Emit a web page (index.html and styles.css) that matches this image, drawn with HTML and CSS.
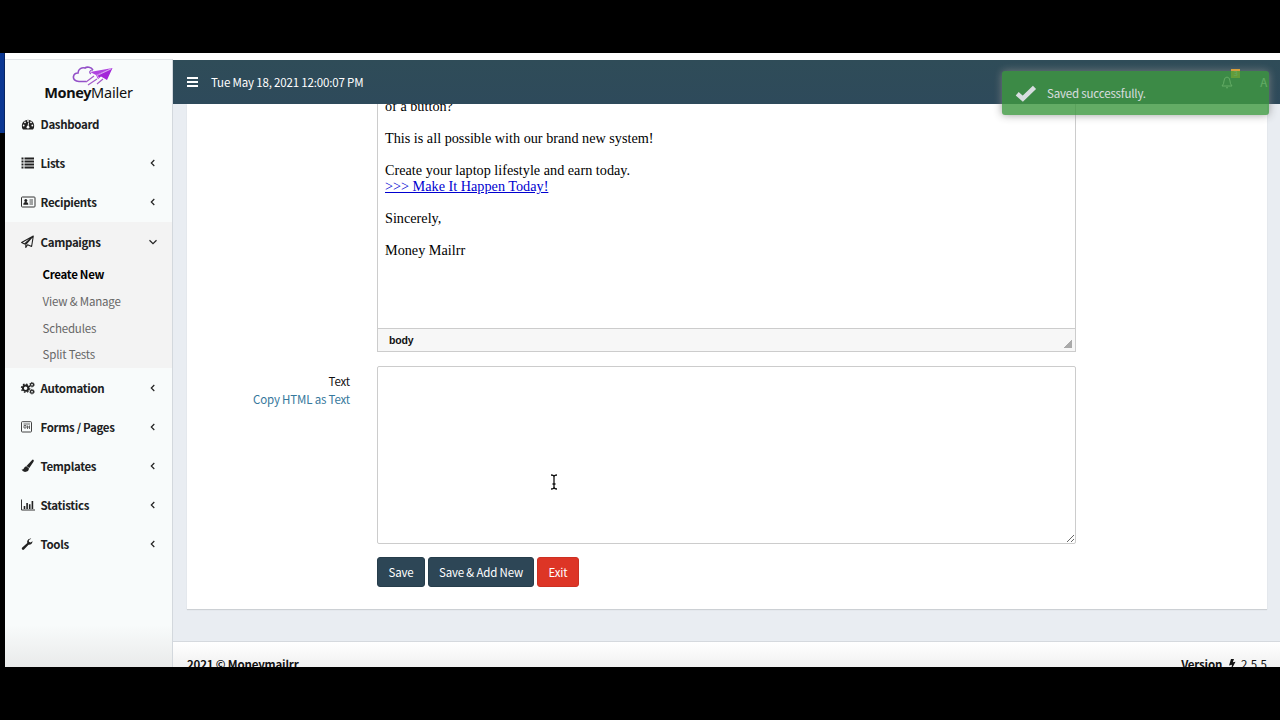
FILE: index.html
```html
<!DOCTYPE html>
<html lang="en">
<head>
<meta charset="utf-8">
<title>MoneyMailer - Campaigns</title>
<link rel="stylesheet" href="styles.css">
</head>
<body>
<div class="screen">
  <div class="desktop-edge"></div>
  <div class="app">
    <aside class="sidebar">
      <div class="logo">
        <svg class="logo-mark" width="42" height="21" viewBox="0 0 42 21" fill="none">
          <path d="M14 15.500H7C3 15.500 1 13 1.500 10.500C2 8 4 7 6 7C6 3 10 1 13 2C15 .500 19 1 21 4" stroke="#9350c8" stroke-width="1.600"/>
          <path d="M21 4C17 4 17 7 19 8" stroke="#9350c8" stroke-width="1.200"/>
          <path d="M40.500 2L18 6L24 9Z" fill="#b043e0"/>
          <path d="M40.500 2L24 9L26 13L29 10.500L35 14Z" fill="#a325d8"/>
          <path d="M39 3L25 9.500L27 12" stroke="#f2dcfa" stroke-width=".7"/>
          <path d="M22 10L14 16M25 13L16 19M31 13L25 18" stroke="#a35ac8" stroke-width="1.200"/>
        </svg>
        <div class="logo-text"><b>Money</b>Mailer</div>
      </div>
      <nav class="menu">
        <a class="item"><svg class="ico" viewBox="0 0 14 14"><path d="M2 12.500A6.200 6.200 0 1 1 12 12.500Z" fill="#222"/><g fill="#fff"><circle cx="2.700" cy="8.500" r=".9"/><circle cx="4" cy="5.300" r=".9"/><circle cx="7" cy="4" r=".9"/><circle cx="10" cy="5.300" r=".9"/><circle cx="11.300" cy="8.500" r=".9"/></g><path d="M7.600 5.500L7 10" stroke="#fff" stroke-width=".9"/><circle cx="7" cy="10.200" r="1.400" fill="#fff"/></svg><span>Dashboard</span></a>
        <a class="item"><svg class="ico" viewBox="0 0 14 14"><path d="M.5 2.500H2.500M.5 5.500H2.500M.5 8.500H2.500M.5 11.500H2.500M3.500 2.500H13M3.500 5.500H13M3.500 8.500H13M3.500 11.500H13" stroke="#222" stroke-width="1.900"/></svg><span>Lists</span><svg class="chev" viewBox="0 0 8 8"><path d="M5.300 1L2.300 4L5.300 7"/></svg></a>
        <a class="item"><svg class="ico" viewBox="0 0 14 14"><rect x=".5" y="2" width="13.500" height="10" rx=".8" fill="none" stroke="#333"/><circle cx="4.800" cy="5.500" r="1.500" fill="#222"/><path d="M2.300 9.800Q2.300 7 4.800 7T7.300 9.800Z" fill="#222"/><path d="M8.500 5H12M8.500 7H12M8.500 9H12" stroke="#333" stroke-width=".9"/></svg><span>Recipients</span><svg class="chev" viewBox="0 0 8 8"><path d="M5.300 1L2.300 4L5.300 7"/></svg></a>
        <div class="group">
          <a class="item"><svg class="ico" viewBox="0 0 14 14"><path d="M12.300 1L.6 7.500L3.600 9L12.300 1L10.600 11.500L6.600 9.700L4.800 12.500V9.500L12.300 1" fill="none" stroke="#222" stroke-width="1.100" stroke-linejoin="round"/></svg><span>Campaigns</span><svg class="chev" viewBox="0 0 8 8"><path d="M.5 2.300L4 5.700L7.500 2.300"/></svg></a>
          <a class="sub active">Create New</a>
          <a class="sub">View &amp; Manage</a>
          <a class="sub">Schedules</a>
          <a class="sub">Split Tests</a>
        </div>
        <a class="item"><svg class="ico" viewBox="0 0 14 14"><g fill="none" stroke="#222"><circle cx="4.600" cy="7.200" r="2.700" stroke-width="1.900"/><circle cx="4.600" cy="7.200" r="4.100" stroke-width="1.400" stroke-dasharray="1.600 1.620"/><circle cx="11" cy="3.700" r="1.500" stroke-width="1.300"/><circle cx="11" cy="10.700" r="1.500" stroke-width="1.300"/><circle cx="11" cy="3.700" r="2.300" stroke-width=".8" stroke-dasharray="1 .8"/><circle cx="11" cy="10.700" r="2.300" stroke-width=".8" stroke-dasharray="1 .8"/></g></svg><span>Automation</span><svg class="chev" viewBox="0 0 8 8"><path d="M5.300 1L2.300 4L5.300 7"/></svg></a>
        <a class="item"><svg class="ico" viewBox="0 0 14 14"><rect x=".5" y="1.700" width="10" height="10.300" rx=".8" fill="none" stroke="#444"/><path d="M2.500 4H9M3 5.500H5V8H3ZM6.500 5.500V9M8.500 5.500V9M6.500 7H8.500" fill="none" stroke="#555" stroke-width=".9"/></svg><span>Forms / Pages</span><svg class="chev" viewBox="0 0 8 8"><path d="M5.300 1L2.300 4L5.300 7"/></svg></a>
        <a class="item"><svg class="ico" viewBox="0 0 14 14"><path d="M12.300.7Q13.300 1.300 12.500 2.800L8.300 9L5.500 6.900L10.900 1.200Q11.600.4 12.300.7ZM5.200 7.200L7.900 9.300Q8 12.800 4 12.900Q1.500 12.900.5 10.200Q2 11 2.800 9.500Q3.500 7.500 5.200 7.200Z" fill="#222"/></svg><span>Templates</span><svg class="chev" viewBox="0 0 8 8"><path d="M5.300 1L2.300 4L5.300 7"/></svg></a>
        <a class="item"><svg class="ico" viewBox="0 0 14 14"><path d="M.5 1.500V12H14" fill="none" stroke="#333"/><path d="M3.500 8V11M6.100 5V11M8.700 6.300V11M11.400 3V11" stroke="#222" stroke-width="1.600"/></svg><span>Statistics</span><svg class="chev" viewBox="0 0 8 8"><path d="M5.300 1L2.300 4L5.300 7"/></svg></a>
        <a class="item"><svg class="ico" viewBox="0 0 14 14"><path d="M9.900 1.500Q7 1.300 6.200 4Q6 5 6.300 6L1 10.800Q.4 11.800 1.200 12.500T3 12.600L7.500 7.700Q10.800 8 11.700 4.200L9.400 5.500L7.900 4.700V3L10.200 1.700Z" fill="#222"/></svg><span>Tools</span><svg class="chev" viewBox="0 0 8 8"><path d="M5.300 1L2.300 4L5.300 7"/></svg></a>
      </nav>
    </aside>
    <div class="main">
      <header class="topbar">
        <svg width="11" height="10" viewBox="0 0 11 10"><path d="M0 1H11M0 5H11M0 9H11" stroke="#fff" stroke-width="1.900"/></svg>
        <span class="date">Tue May 18, 2021 12:00:07 PM</span>
        <div class="bell"><svg width="12" height="13" viewBox="0 0 12 13" fill="none" stroke="#fff"><path d="M6 1Q9 1.500 9 5Q9 8 11 10H1Q3 8 3 5Q3 1.500 6 1ZM5 11.500Q6 12.500 7 11.500"/></svg><i class="badge">3</i></div>
        <span class="user">A</span>
      </header>
      <section class="content">
        <div class="card">
          <div class="row">
            <div class="label"></div>
            <div class="editor">
              <div class="doc">
                <p>of a button?</p>
                <p>This is all possible with our brand new system!</p>
                <p>Create your laptop lifestyle and earn today.<br><a class="doclink">&gt;&gt;&gt; Make It Happen Today!</a></p>
                <p>Sincerely,</p>
                <p>Money Mailrr</p>
              </div>
              <div class="path"><b>body</b><i class="grip"></i></div>
            </div>
          </div>
          <div class="row">
            <div class="label">Text<br><a class="copy">Copy HTML as Text</a></div>
            <div class="textarea"><svg width="9" height="9" viewBox="0 0 9 9"><path d="M1 8L8 1M5 8L8 5" stroke="#555" stroke-width=".9"/></svg></div>
          </div>
          <div class="buttons"><a class="btn w1">Save</a><a class="btn w2">Save &amp; Add New</a><a class="btn exit">Exit</a></div>
        </div>
      </section>
      <footer class="footer"><b>2021 © Moneymailrr</b><span><b>Version</b> <svg width="8" height="12" viewBox="0 0 8 12"><path d="M3 0H6L4.800 3.300L7.500 2.700L3 11.500L4 5.700L1 6.500Z" fill="#111"/></svg> <span class="num">2.5.5</span></span></footer>
    </div>
  </div>
  <div class="toast"><svg width="22" height="17" viewBox="0 0 22 17"><path d="M2.200 8.800L7.800 13.600L19.500 2.300" fill="none" stroke="#fff" stroke-width="4.500"/></svg><span>Saved successfully.</span></div>
  <svg class="cursor" width="8" height="16" viewBox="0 0 8 16"><path d="M1 1Q4 1 4 3Q4 1 7 1M4 3V13M1 15Q4 15 4 13Q4 15 7 15M2.500 10H5.500" fill="none" stroke="#111" stroke-width="1.300"/></svg>
</div>
</body>
</html>
```
FILE: styles.css
```css
* { box-sizing: border-box; }
body { margin: 0; background: #000; font: 11.500px/18px "Noto Sans CJK SC", "Noto Sans", sans-serif; letter-spacing: -.17px; color: #111; }
b { letter-spacing: -.18px; }
.screen { position: relative; width: 1280px; height: 720px; padding: 53px 0; overflow: hidden; display: flex; }
.desktop-edge { width: 5px; height: 80px; background: linear-gradient(90deg, #0b3792 70%, #071c48); flex: none; }
.app { flex: 1; height: 614px; display: flex; padding-top: 7px; background: #fff; overflow: hidden; }
.sidebar { width: 168px; height: 608px; flex: none; border-top: 1px solid #e2e5e8; margin-top: -1px; border-right: 1px solid #d3d8dd; background: linear-gradient(#f8fbfb 0, #f8fbfb 565px, #e9eaea 608px); }
.logo { height: 44.500px; padding-top: 6px; display: flex; flex-direction: column; align-items: center; }
.logo-mark { flex: none; margin-left: 8px; }
.logo-text { font: 14.500px/18px "Noto Sans", sans-serif; letter-spacing: -.2px; margin-top: -4px; white-space: nowrap; color: #111; }
.logo-text b { font-weight: 700; letter-spacing: -.4px; }
.menu { font-weight: 700; letter-spacing: -.32px; }
.item { height: 39.200px; display: flex; align-items: center; padding: 0 15px 0 15.500px; color: #202122; }
.ico { width: 14px; height: 14px; margin-right: 6px; flex: none; overflow: visible; }
.chev { width: 8px; height: 8px; margin-left: auto; fill: none; stroke: #222; stroke-width: 1.200; }
.group { background: #f3f3f3; }
.sub { display: block; height: 26.700px; line-height: 27px; padding-left: 37.500px; font-weight: 400; color: #666; letter-spacing: -.17px; }
.sub.active { font-weight: 700; color: #000; letter-spacing: -.3px; }
.main { flex: 1; display: flex; flex-direction: column; min-width: 0; }
.topbar { height: 44px; flex: none; background: linear-gradient(#2f4c58, #2e4a5b); color: #fff; display: flex; align-items: center; padding: 0 13px 0 14px; }
.date { margin-left: 13px; }
.bell { margin-left: auto; position: relative; display: flex; }
.badge { position: absolute; left: 10px; top: -7px; width: 9px; height: 9px; background: #ffab1c; font: 7px/9px "Noto Sans", sans-serif; letter-spacing: 0; text-align: center; color: #fff; }
.user { margin-left: 27px; }
.content { height: 537px; flex: none; background: #e9edf2; padding: 0 13px 0 14px; }
.card { height: 505px; background: #fff; box-shadow: 0 1px 1px rgba(0,0,0,.12); padding-right: 191px; }
.row { display: flex; margin-bottom: 14px; }
.row + .row { margin-bottom: 13px; }
.label { width: 190px; flex: none; padding: 6px 27px 0 0; text-align: right; }
.copy { color: #36789c; }
.editor { flex: 1; height: 248px; border: 1px solid #ccc; border-top: 0; }
.doc { height: 224px; overflow: hidden; padding: 0 7px; font: 14.220px/16px "Liberation Serif", serif; letter-spacing: 0; color: #000; }
.doc p { margin: 0 0 16px; }
.doc p:first-child { margin-top: -6px; }
.doclink { color: #0000d0; text-decoration: underline; }
.path { height: 23px; border-top: 1px solid #ccc; background: #f7f7f7; padding: 0 3px 0 11px; display: flex; justify-content: space-between; align-items: center; font: 10.500px/18px "Liberation Sans", sans-serif; }
.path b { letter-spacing: -.2px; }
.grip { width: 8px; height: 8px; margin-top: 8px; background: linear-gradient(135deg, transparent 50%, #aaa 50%); }
.textarea { flex: 1; height: 178px; border: 1px solid #ccc; border-radius: 2px; display: flex; align-items: flex-end; justify-content: flex-end; }
.buttons { display: flex; gap: 3px; padding-left: 190px; }
.btn { height: 30px; border-radius: 3px; background: #2d4656; border: 1px solid #263d4b; color: #fff; line-height: 28px; text-align: center; }
.w1 { width: 48px; }
.w2 { width: 106px; }
.exit { width: 42px; background: #dd3526; border-color: #cc3022; }
.footer { flex: 1; border-top: 1px solid #d5d9de; background: linear-gradient(#fff, #f1f1f1); padding: 13px 13px 0 14px; display: flex; justify-content: space-between; white-space: nowrap; overflow: hidden; }
.footer svg { vertical-align: -2px; margin: 0 3px; }
.num { letter-spacing: .1px; }
.toast { position: absolute; left: 1002px; top: 71px; width: 267px; height: 44px; border-radius: 3px; background: #409942; opacity: .81; box-shadow: 0 0 9px #888; color: #fff; display: flex; align-items: center; padding-left: 13px; gap: 10px; }
.cursor { position: absolute; left: 550px; top: 474px; }
```
